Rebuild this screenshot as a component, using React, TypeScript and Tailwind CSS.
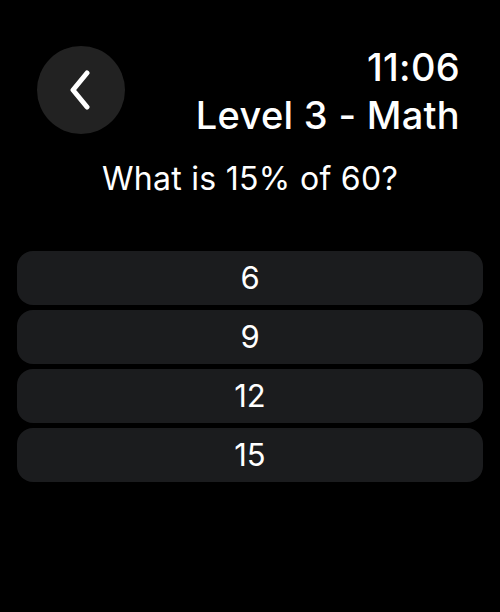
export default function App() {
  const answers = ["6", "9", "12", "15"];

  return (
    <div
      className="w-[500px] h-[612px] bg-black text-white overflow-hidden"
      style={{ fontFamily: "Inter, 'Noto Sans', sans-serif" }}
    >
      {/* header */}
      <div className="flex justify-between items-start pl-[37px] pr-[40px] pt-[46px]">
        <button className="w-[88px] h-[88px] rounded-full bg-[#222222] flex items-center justify-center">
          <svg width="26" height="40" viewBox="0 0 26 40" fill="none" className="-ml-[2px]">
            <path
              d="M20 3 L6 20 L20 37"
              stroke="white"
              strokeWidth="5"
              strokeLinecap="round"
              strokeLinejoin="round"
            />
          </svg>
        </button>
        <div className="flex flex-col items-end -mt-[1px]">
          <div className="text-[38px] leading-[44px] font-medium tracking-[0.3px]">11:06</div>
          <div className="text-[38px] leading-[44px] font-medium tracking-[0.3px] mt-[4px]">Level 3 - Math</div>
        </div>
      </div>

      {/* question */}
      <div className="text-center text-[32px] leading-[36px] tracking-[0.3px] mt-[24px]">What is 15% of 60?</div>

      {/* answers */}
      <div className="flex flex-col gap-[5px] px-[17px] mt-[54px]">
        {answers.map((a) => (
          <button
            key={a}
            className="h-[54px] rounded-[16px] bg-[#1b1c1e] text-[31px] flex items-center justify-center"
          >
            {a}
          </button>
        ))}
      </div>
    </div>
  );
}
